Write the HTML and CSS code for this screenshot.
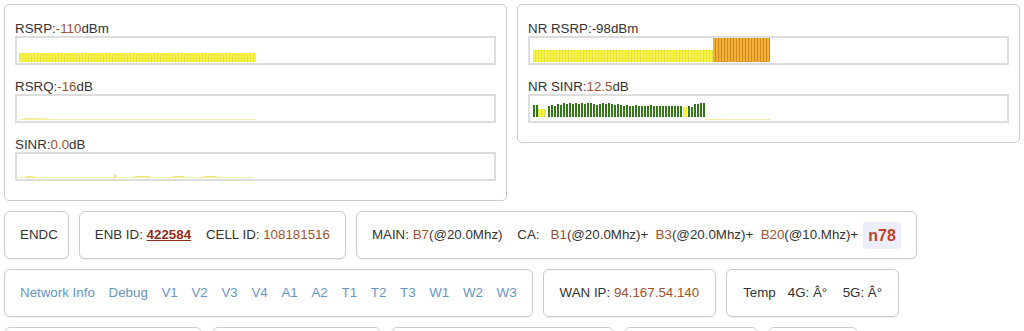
FILE: index.html
```html
<!DOCTYPE html>
<html lang="en">
<head>
<meta charset="utf-8">
<title>Signal</title>
<link rel="stylesheet" href="styles.css">
</head>
<body>
<div class="top">
  <section class="panel">
    <div class="metric">
      <div class="label">RSRP:<span class="val">-110</span>dBm</div>
      <div class="chart">
        <svg width="100%" height="25">
          <defs>
            <pattern id="pY" width="3" height="30" patternUnits="userSpaceOnUse">
              <rect x="0" y="0" width="2" height="30" fill="#f8f43a"/>
              <rect x="2" y="0" width="1" height="30" fill="#e4de58"/>
            </pattern>
            <pattern id="pO" width="3" height="30" patternUnits="userSpaceOnUse">
              <rect x="0" y="0" width="2" height="30" fill="#f1b139"/>
              <rect x="2" y="0" width="1" height="30" fill="#d0861c"/>
            </pattern>
          </defs>
          <rect x="2" y="15" width="237" height="9" fill="url(#pY)"/>
        </svg>
      </div>
    </div>
    <div class="metric">
      <div class="label">RSRQ:<span class="val">-16</span>dB</div>
      <div class="chart">
        <svg width="100%" height="25">
          <path d="M2 23.5 H239" stroke="#f3eea4" stroke-width="1" fill="none"/>
          <path d="M6 23.5 L10 22.5 H28 L31 23.5" stroke="#f1ec98" stroke-width="1" fill="none"/>
        </svg>
      </div>
    </div>
    <div class="metric">
      <div class="label">SINR:<span class="val">0.0</span>dB</div>
      <div class="chart">
        <svg width="100%" height="25">
          <path d="M0 23.5 H237" stroke="#f3eea4" stroke-width="1" fill="none"/>
          <g stroke="#eee880" stroke-width="1" fill="none">
            <path d="M8 23.5 L10 22.5 H16 L18 23.5"/>
            <path d="M116 23.5 L118 22.5 H132 L134 23.5"/>
            <path d="M155 23.5 L157 22.5 H166 L168 23.5"/>
            <path d="M185 23.5 L187 22.5 H199 L201 23.5"/>
          </g>
          <rect x="97" y="21" width="2" height="2" fill="#e9e26a"/>
        </svg>
      </div>
    </div>
  </section>
  <section class="panel">
    <div class="metric">
      <div class="label">NR RSRP:-98dBm</div>
      <div class="chart">
        <svg width="100%" height="25">
          <rect x="3" y="12" width="180" height="12" fill="url(#pY)"/>
          <rect x="183" y="0" width="57" height="24" fill="url(#pO)"/>
        </svg>
      </div>
    </div>
    <div class="metric">
      <div class="label">NR SINR:<span class="val">12.5</span>dB</div>
      <div class="chart">
        <svg width="100%" height="25">
          <path d="M175 23.5 H240" stroke="#f3eea4" stroke-width="1" fill="none"/>
          <rect x="8" y="13" width="8" height="8" fill="url(#pY)"/>
          <rect x="153" y="11" width="4" height="10" fill="#f6f24a"/>
          <g fill="#347719">
            <rect x="3" y="9" width="2" height="12"/>
            <rect x="6" y="9" width="2" height="12"/>
            <rect x="18" y="10" width="2" height="11"/>
            <rect x="21" y="9" width="2" height="12"/>
            <rect x="24" y="10" width="2" height="11"/>
            <rect x="27" y="8" width="2" height="13"/>
            <rect x="30" y="9" width="2" height="12"/>
            <rect x="33" y="7" width="2" height="14"/>
            <rect x="36" y="8" width="2" height="13"/>
            <rect x="39" y="7" width="2" height="14"/>
            <rect x="42" y="8" width="2" height="13"/>
            <rect x="45" y="7" width="2" height="14"/>
            <rect x="48" y="8" width="2" height="13"/>
            <rect x="51" y="7" width="2" height="14"/>
            <rect x="54" y="8" width="2" height="13"/>
            <rect x="57" y="7" width="2" height="14"/>
            <rect x="60" y="7" width="2" height="14"/>
            <rect x="63" y="8" width="2" height="13"/>
            <rect x="66" y="9" width="2" height="12"/>
            <rect x="69" y="8" width="2" height="13"/>
            <rect x="72" y="7" width="2" height="14"/>
            <rect x="75" y="8" width="2" height="13"/>
            <rect x="78" y="7" width="2" height="14"/>
            <rect x="81" y="8" width="2" height="13"/>
            <rect x="84" y="9" width="2" height="12"/>
            <rect x="87" y="8" width="2" height="13"/>
            <rect x="90" y="9" width="2" height="12"/>
            <rect x="93" y="10" width="2" height="11"/>
            <rect x="96" y="9" width="2" height="12"/>
            <rect x="99" y="10" width="2" height="11"/>
            <rect x="102" y="10" width="2" height="11"/>
            <rect x="105" y="9" width="2" height="12"/>
            <rect x="108" y="10" width="2" height="11"/>
            <rect x="111" y="10" width="2" height="11"/>
            <rect x="114" y="10" width="2" height="11"/>
            <rect x="117" y="10" width="2" height="11"/>
            <rect x="120" y="9" width="2" height="12"/>
            <rect x="123" y="10" width="2" height="11"/>
            <rect x="126" y="10" width="2" height="11"/>
            <rect x="129" y="10" width="2" height="11"/>
            <rect x="132" y="10" width="2" height="11"/>
            <rect x="135" y="10" width="2" height="11"/>
            <rect x="138" y="10" width="2" height="11"/>
            <rect x="141" y="10" width="2" height="11"/>
            <rect x="144" y="10" width="2" height="11"/>
            <rect x="147" y="10" width="2" height="11"/>
            <rect x="150" y="10" width="2" height="11"/>
            <rect x="158" y="10" width="2" height="11"/>
            <rect x="161" y="11" width="2" height="10"/>
            <rect x="164" y="8" width="2" height="13"/>
            <rect x="167" y="8" width="2" height="13"/>
            <rect x="170" y="7" width="2" height="14"/>
            <rect x="173" y="7" width="2" height="14"/>
          </g>
        </svg>
      </div>
    </div>
  </section>
</div>

<div class="row">
  <div class="box endc">ENDC</div>
  <div class="box">ENB ID: <a class="enb" href="#">422584</a><span class="s4">CELL ID: </span><span class="val">108181516</span></div>
  <div class="box">MAIN: <span class="val">B7</span>(@20.0Mhz)<span class="s4">CA:</span><span class="s3 val">B1</span>(@20.0Mhz)+<span class="s2 val">B3</span>(@20.0Mhz)+<span class="s2 val">B20</span>(@10.Mhz)+<span class="nr">n78</span></div>
</div>

<div class="row">
  <nav class="box nav">
    <a href="#">Network Info</a><a href="#">Debug</a><a href="#">V1</a><a href="#">V2</a><a href="#">V3</a><a href="#">V4</a><a href="#">A1</a><a href="#">A2</a><a href="#">T1</a><a href="#">T2</a><a href="#">T3</a><a href="#">W1</a><a href="#">W2</a><a href="#">W3</a>
  </nav>
  <div class="box wan">WAN IP: <span class="val">94.167.54.140</span></div>
  <div class="box temp">Temp<span class="s3">4G: Â°</span><span class="s4">5G: Â°</span></div>
</div>

<div class="row">
  <div class="box w1"></div>
  <div class="box w2"></div>
  <div class="box w3"></div>
  <div class="box w4"></div>
  <div class="box w5"></div>
</div>
</body>
</html>
```

FILE: styles.css
```css
* {
  box-sizing: border-box;
}

body {
  margin: 4px;
  font-family: "Liberation Sans", Arial, sans-serif;
  font-size: 13.33px;
  color: #333;
  background: #fff;
}

.top {
  display: grid;
  grid-template-columns: 1fr 1fr;
  gap: 10px;
  align-items: start;
}

.panel {
  border: 1px solid #ccc;
  border-radius: 5px;
  padding: 16px 10px 19px;
}

.metric + .metric {
  margin-top: 14px;
}

.label {
  height: 15px;
  line-height: 15px;
  white-space: nowrap;
}

.chart {
  height: 29px;
  border: 2px solid #ddd;
}

.chart svg {
  display: block;
  width: 100%;
  height: 25px;
}

.val {
  color: #a0522d;
}

.row {
  display: flex;
  gap: 10px;
  margin-top: 10px;
}

.box {
  flex: none;
  height: 48px;
  border: 1px solid #ccc;
  border-radius: 6px;
  padding: 0 15px;
  line-height: 46px;
  white-space: nowrap;
  box-shadow: 0 1px 1px rgba(0, 0, 0, 0.07);
}

.endc {
  padding: 0 10px 0 15px;
}

.wan {
  padding: 0 16px;
}

.temp {
  padding: 0 16px 0 16px;
}

.temp .s3 {
  margin-left: 12px;
}

.temp .s4 {
  margin-left: 15.5px;
}

.enb {
  font-weight: bold;
  color: #962c1b;
  text-decoration: underline;
}

.s2 {
  margin-left: 7.4px;
}

.s3 {
  margin-left: 11.1px;
}

.s4 {
  margin-left: 14.8px;
}

.nr {
  display: inline-block;
  vertical-align: middle;
  margin-left: 5px;
  padding: 5px;
  line-height: 17px;
  font-size: 16px;
  font-weight: bold;
  color: #c2412a;
  background: #eceef9;
  border-radius: 3px;
}

.nav a {
  color: #6496c8;
  text-decoration: none;
}

.nav a + a {
  margin-left: 13.7px;
}

.w1 { width: 198px; }
.w2 { width: 169px; }
.w3 { width: 223px; }
.w4 { width: 134px; }
.w5 { width: 90px; }
```
